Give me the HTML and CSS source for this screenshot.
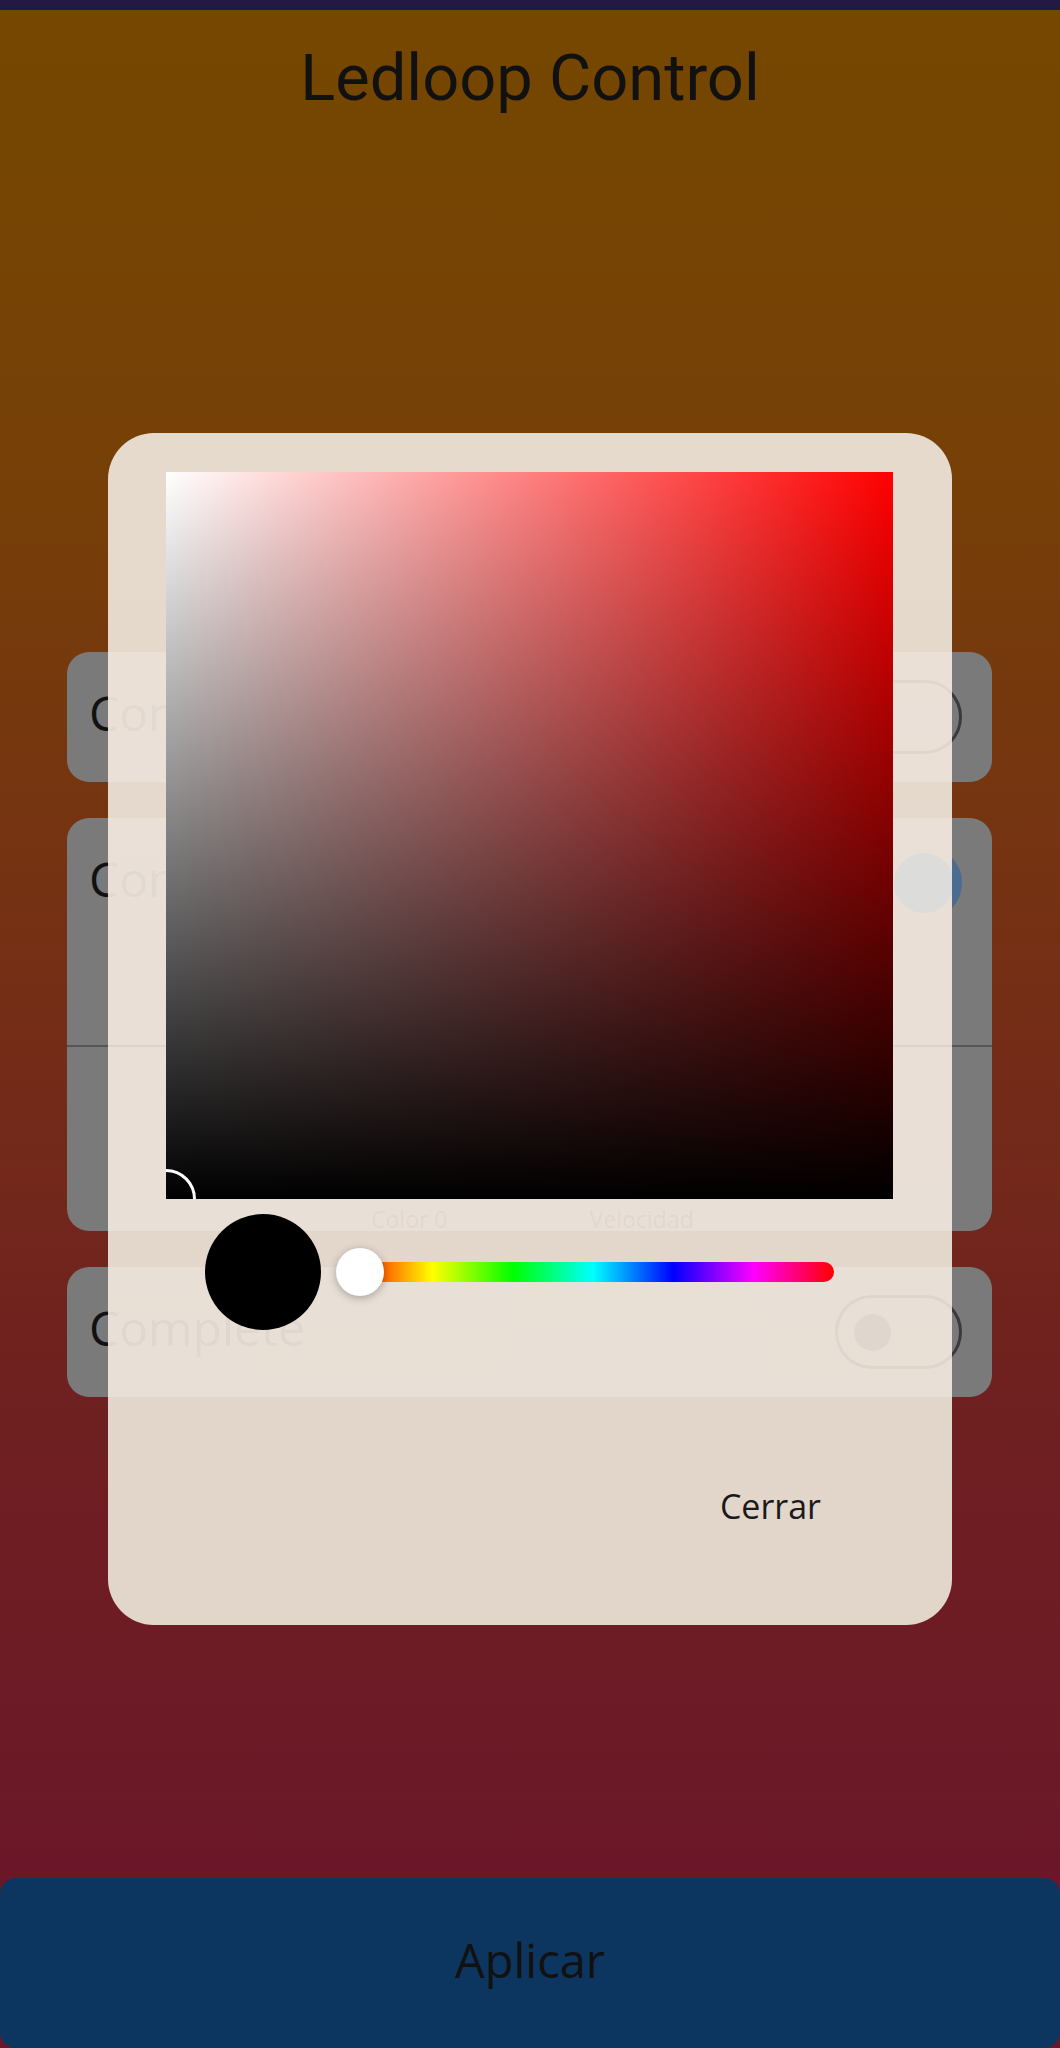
FILE: index.html
```html
<!DOCTYPE html>
<html lang="es">
<head>
<meta charset="utf-8">
<title>Ledloop Control</title>
<link rel="stylesheet" href="styles.css">
</head>
<body>
<div class="statusbar"></div>
<header class="appbar"><h1 class="title">Ledloop Control</h1></header>

<main class="list">
  <section class="card">
    <div class="card-row"><span class="card-label">Constante</span><span class="switch"><span class="knob"></span></span></div>
  </section>
  <section class="card card-expanded">
    <div class="card-row"><span class="card-label">Continuo</span><span class="switch switch-on"><span class="knob"></span></span></div>
    <div class="card-body"></div>
    <div class="divider"></div>
    <div class="card-foot"><span class="foot-label">Color 0</span><span class="foot-label">Velocidad</span></div>
  </section>
  <section class="card">
    <div class="card-row"><span class="card-label">Complete</span><span class="switch"><span class="knob"></span></span></div>
  </section>
</main>

<button class="apply">Aplicar</button>

<div class="dialog" role="dialog" aria-label="Selector de color">
  <div class="ghost" aria-hidden="true">
    <div class="card">
      <div class="card-row"><span class="card-label">Constante</span><span class="switch"><span class="knob"></span></span></div>
    </div>
    <div class="card card-expanded">
      <div class="card-row"><span class="card-label">Continuo</span><span class="switch switch-on"><span class="knob"></span></span></div>
      <div class="card-body"></div>
      <div class="divider"></div>
      <div class="card-foot"><span class="foot-label">Color 0</span><span class="foot-label">Velocidad</span></div>
    </div>
    <div class="card">
      <div class="card-row"><span class="card-label">Complete</span><span class="switch"><span class="knob"></span></span></div>
    </div>
  </div>

  <div class="dialog-content">
    <div class="sv-square"><span class="sv-handle"></span></div>
    <div class="picker-row">
      <span class="preview"></span>
      <div class="hue-slider">
        <div class="hue-bar"></div>
        <span class="hue-thumb"></span>
      </div>
    </div>
    <div class="dialog-actions"><button class="text-button">Cerrar</button></div>
  </div>
</div>
</body>
</html>
```

FILE: styles.css
```css
* { box-sizing: border-box; }

html, body { margin: 0; padding: 0; }

body {
  position: relative;
  width: 1060px;
  height: 2048px;
  overflow: hidden;
  display: flex;
  flex-direction: column;
  font-family: "Open Sans", "Noto Sans", sans-serif;
  background: linear-gradient(to bottom,
    #754800 0px,
    #763f08 500px,
    #752e16 1000px,
    #6f2020 1400px,
    #6b1729 1878px,
    #6b1729 2048px);
}

.statusbar {
  flex: none;
  height: 10px;
  background: #231a43;
}

.appbar {
  flex: none;
  padding-top: 30px;
  text-align: center;
}

.title {
  margin: 0;
  font-family: Roboto, "Liberation Sans", sans-serif;
  font-weight: 400;
  font-size: 65px;
  line-height: 77px;
  color: #111;
}

.list {
  flex: none;
  margin-top: 535px;
  padding: 0 68px 0 67px;
  display: flex;
  flex-direction: column;
  gap: 36px;
}

.card {
  background: #7a7a7a;
  border-radius: 22px;
}

.card-row {
  height: 130px;
  display: flex;
  align-items: center;
  justify-content: space-between;
  padding: 0 30px 0 22px;
}

.card-label {
  font-size: 48px;
  line-height: 48px;
  margin-bottom: 8px;
  color: #111;
  white-space: nowrap;
}

.card-body { height: 97px; }

.divider {
  height: 2px;
  background: #555;
}

.card-foot {
  height: 184px;
  display: flex;
  align-items: flex-end;
  gap: 142px;
  padding-left: 304px;
}

.foot-label {
  font-size: 23px;
  line-height: 24px;
  color: #222;
}

.switch {
  flex: none;
  width: 127px;
  height: 74px;
  border: 3px solid #3a3a3a;
  border-radius: 37px;
  display: flex;
  align-items: center;
  padding-left: 16px;
}

.switch .knob {
  width: 37px;
  height: 37px;
  border-radius: 50%;
  background: #3a3a3a;
}

.switch-on {
  background: #4b6b91;
  border-color: #4b6b91;
  justify-content: flex-end;
  padding: 0 7px 0 0;
}

.switch-on .knob {
  width: 56px;
  height: 56px;
  background: #dfe4ea;
}

.apply {
  flex: none;
  margin-top: auto;
  height: 170px;
  width: 1060px;
  border: none;
  border-radius: 16px;
  background: #0c355f;
  font-family: "Open Sans", "Noto Sans", sans-serif;
  font-size: 47px;
  line-height: 47px;
  color: #111;
  padding: 0 0 6px;
}

/* ---------- dialog ---------- */

.dialog {
  position: absolute;
  left: 108px;
  top: 433px;
  width: 844px;
  height: 1192px;
  border-radius: 46px;
  overflow: hidden;
  background: linear-gradient(to bottom, #e6dacd, #e2d6cb);
}

.ghost {
  position: absolute;
  top: 219px;
  left: -41px;
  width: 925px;
  display: flex;
  flex-direction: column;
  gap: 36px;
}

.ghost .card {
  background: rgba(255, 255, 255, 0.2);
}

.ghost .card-label,
.ghost .foot-label {
  color: rgba(0, 0, 0, 0.05);
}

.ghost .divider { background: rgba(0, 0, 0, 0.05); }

.ghost .switch {
  border-color: rgba(0, 0, 0, 0.045);
}

.ghost .switch .knob { background: rgba(0, 0, 0, 0.035); }

.ghost .switch-on {
  background: transparent;
  border-color: transparent;
}

.ghost .switch-on .knob {
  width: 60px;
  height: 60px;
  margin-right: -2px;
  background: #dcdcda;
}

.dialog-content {
  position: relative;
  height: 100%;
  padding: 39px 58px 0;
  display: flex;
  flex-direction: column;
}

.sv-square {
  position: relative;
  flex: none;
  width: 727px;
  height: 727px;
  overflow: hidden;
  background:
    linear-gradient(to top, #000, rgba(0, 0, 0, 0)),
    linear-gradient(to right, #fff, #f00);
}

.sv-handle {
  position: absolute;
  left: -30px;
  bottom: -30px;
  width: 60px;
  height: 60px;
  border: 3px solid #fff;
  border-radius: 50%;
}

.picker-row {
  flex: none;
  margin-top: 15px;
  height: 116px;
  display: flex;
  align-items: center;
  gap: 15px;
  padding: 0 60px 0 39px;
}

.preview {
  flex: none;
  width: 116px;
  height: 116px;
  border-radius: 50%;
  background: #000;
}

.hue-slider {
  position: relative;
  flex: 1;
  height: 48px;
  display: flex;
  align-items: center;
  padding-left: 16px;
}

.hue-bar {
  flex: 1;
  height: 20px;
  border-radius: 10px;
  background: linear-gradient(to right,
    #f00 0%, #ff0 16.67%, #0f0 33.33%, #0ff 50%,
    #00f 66.67%, #f0f 83.33%, #f00 100%);
}

.hue-thumb {
  position: absolute;
  left: 0;
  top: 0;
  width: 48px;
  height: 48px;
  border-radius: 50%;
  background: #fff;
  box-shadow: 0 2px 8px rgba(0, 0, 0, 0.28);
}

.dialog-actions {
  flex: none;
  margin-top: 152px;
  display: flex;
  justify-content: flex-end;
  padding-right: 73px;
}

.text-button {
  border: none;
  background: none;
  padding: 0;
  font-family: "Open Sans", "Noto Sans", sans-serif;
  font-size: 34px;
  line-height: 48px;
  color: #1a1a1a;
}
```
